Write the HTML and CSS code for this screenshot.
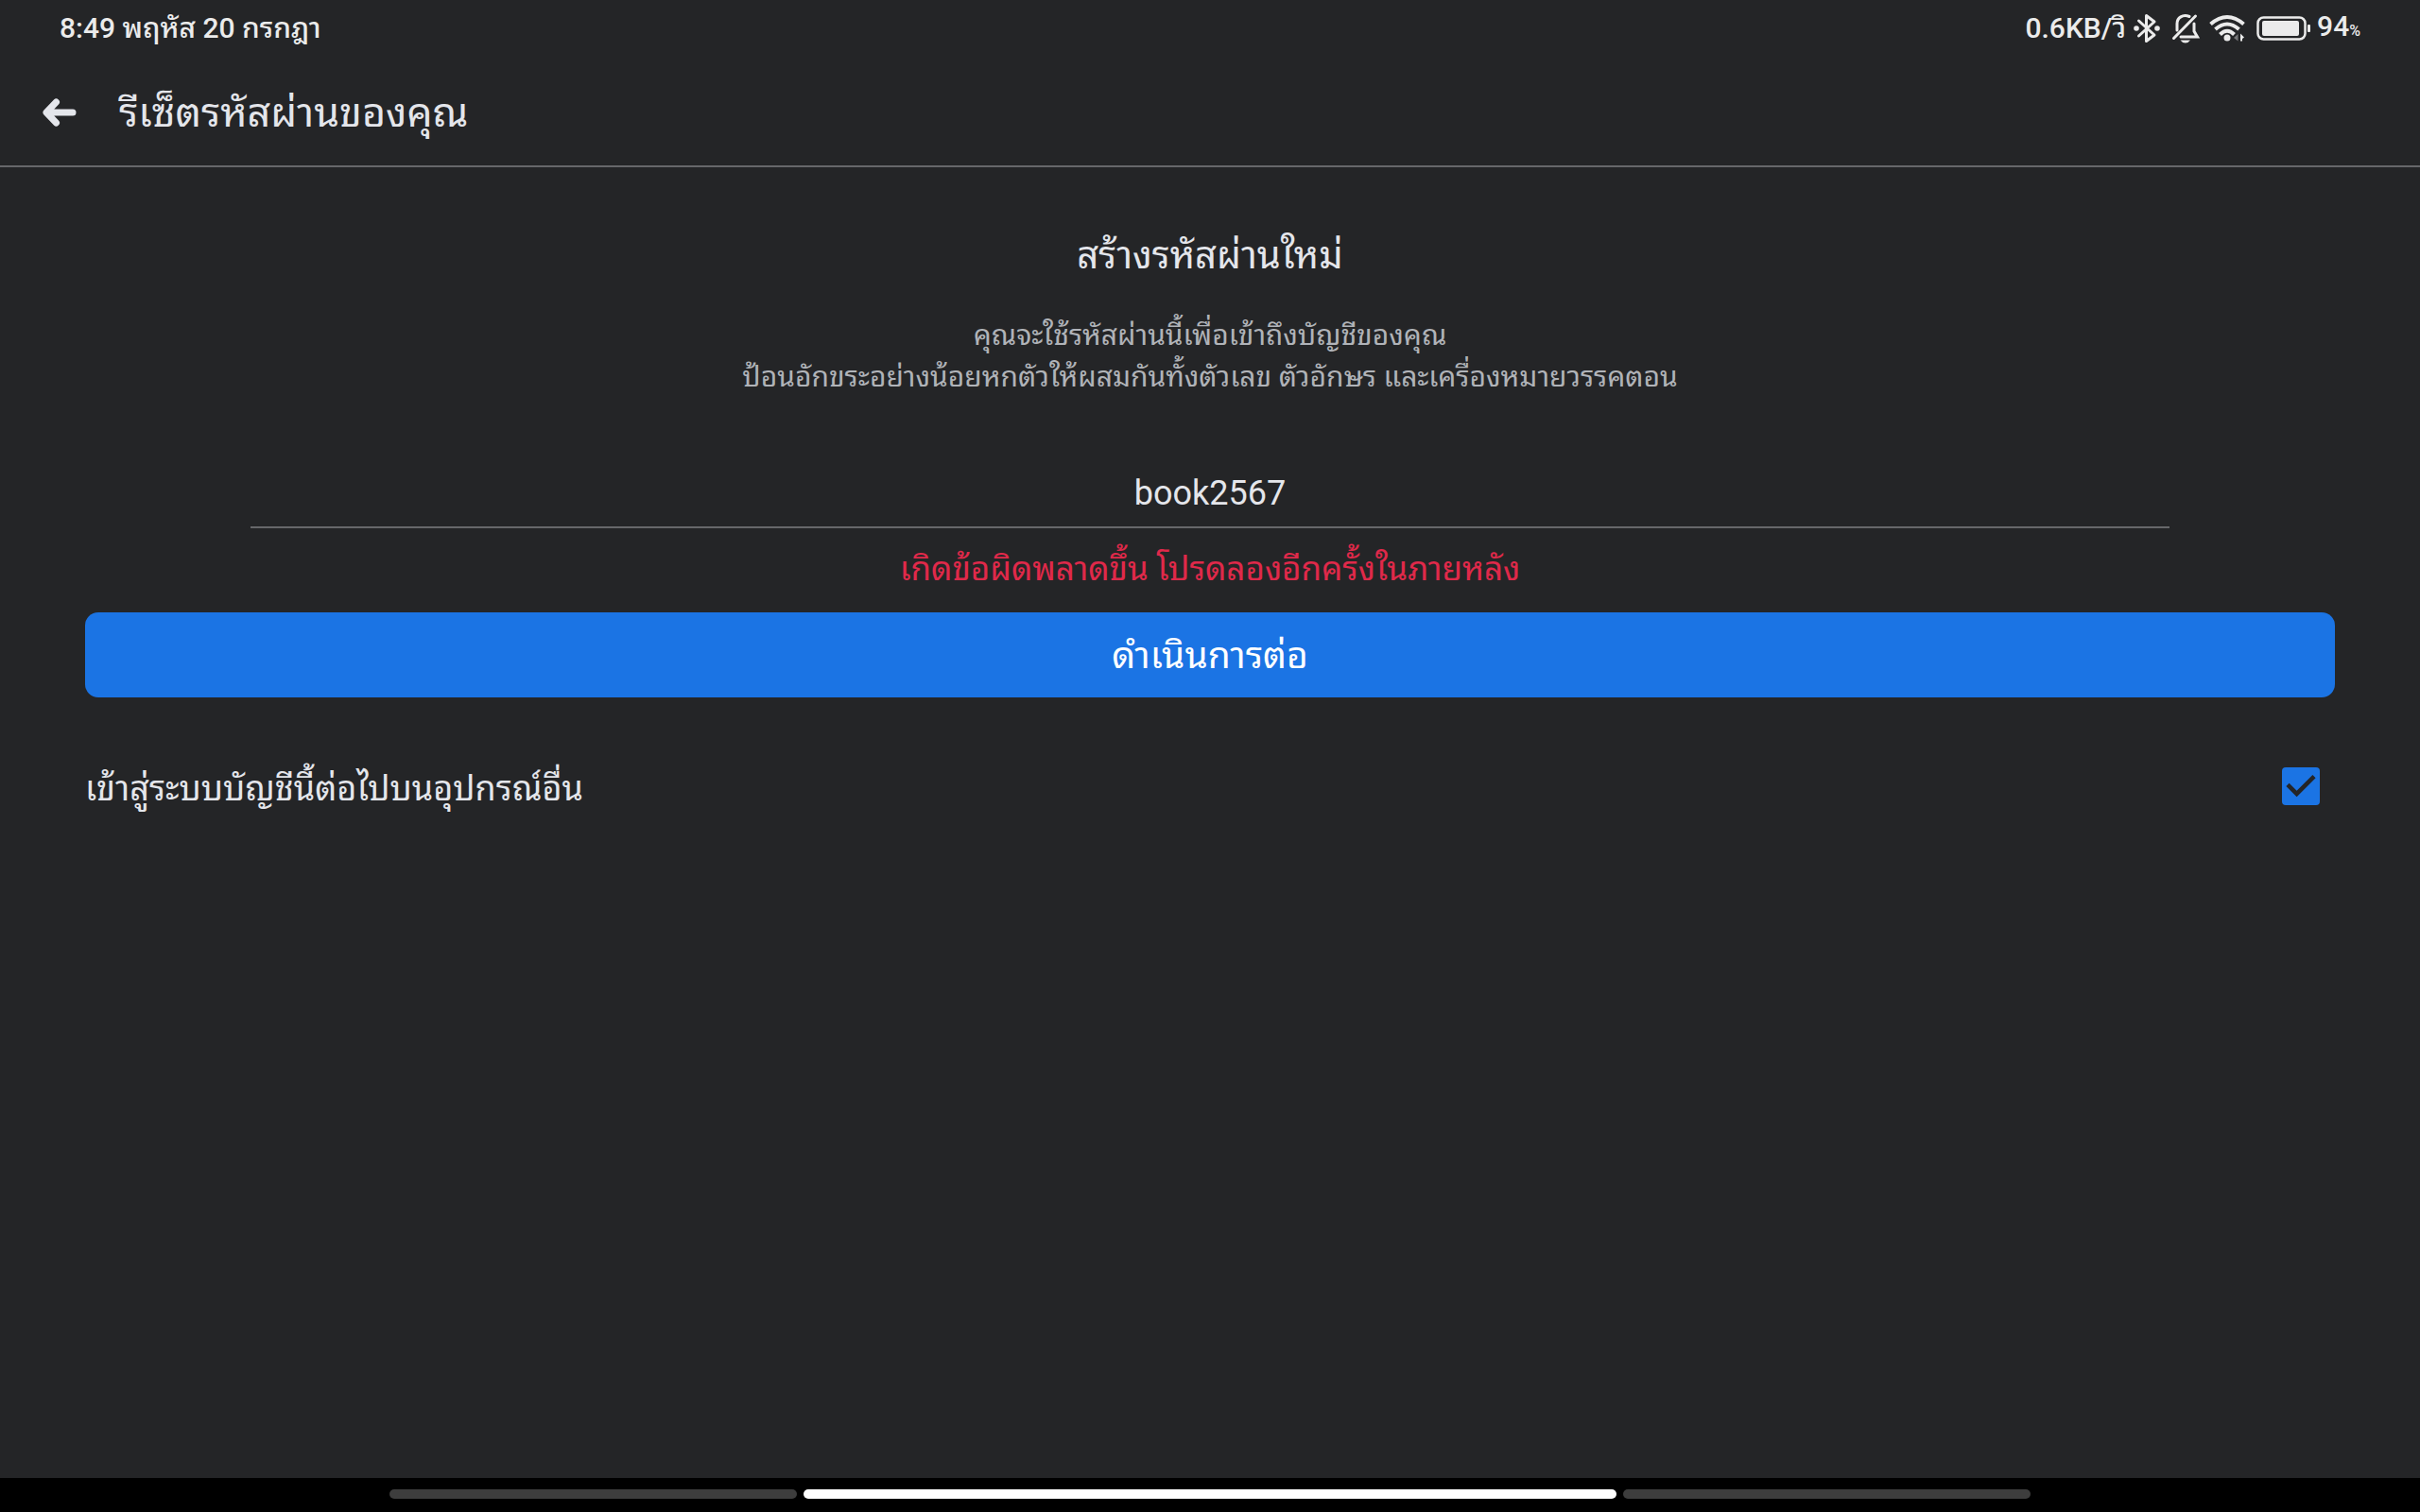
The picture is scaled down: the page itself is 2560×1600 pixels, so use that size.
FILE: index.html
```html
<!DOCTYPE html>
<html lang="th">
<head>
  <meta charset="UTF-8">
  <meta name="viewport" content="width=device-width, initial-scale=1.0">
  <title>รีเซ็ตรหัสผ่านของคุณ</title>
  <link rel="stylesheet" href="styles.css">
</head>
<body>
  <div class="status-bar">
    <span class="clock">8:49 พฤหัส 20 กรกฎา</span>
    <div class="status-icons">
      <span class="speed">0.6KB/วิ</span>
      <!-- bluetooth -->
      <svg class="icon-bluetooth" width="28" height="32" viewBox="0 0 28 32" fill="none" stroke="currentColor" stroke-width="3" stroke-linejoin="round" stroke-linecap="round">
        <path d="M5.500 8 L22 23 L13.500 29.500 V2.500 L22 9 L5.500 24"/>
        <circle cx="3" cy="16" r="2.800" fill="currentColor" stroke="none"/>
        <circle cx="25" cy="16" r="2.800" fill="currentColor" stroke="none"/>
      </svg>
      <!-- muted bell -->
      <svg class="icon-bell" width="30" height="32" viewBox="0 0 30 32" fill="none" stroke="currentColor" stroke-width="3" stroke-linecap="round">
        <path d="M19 3.500 C12 .5 6 5 6 11 V18"/>
        <path d="M24 11 V19 L27.500 25 H10"/>
        <path d="M2.500 26.500 L25.500 3"/>
        <path d="M9.500 28.500 H20 Q18 31.500 14.800 31.500 Q11.500 31.500 9.500 28.500Z" fill="currentColor" stroke="none"/>
      </svg>
      <!-- wifi -->
      <svg class="icon-wifi" width="38" height="30" viewBox="0 0 38 30" fill="none" stroke="currentColor" stroke-width="4">
        <path d="M1.500 10.500 Q19 -4.500 36.500 10.500"/>
        <path d="M6.500 16 Q19 5 31.500 16"/>
        <path d="M11.500 21.500 Q19 14 26.500 21.500"/>
        <circle cx="19" cy="25" r="3.500" fill="currentColor" stroke="none"/>
        <path d="M30.500 21 V28.500 L26 25Z" fill="#77787a" stroke="none"/>
        <path d="M33 28.500 V20.500 L37 24.500 L35 26 V28.500Z" fill="currentColor" stroke="none"/>
      </svg>
      <!-- battery -->
      <svg class="icon-battery" width="58" height="26" viewBox="0 0 58 26" fill="none">
        <rect x="1.500" y="1.500" width="50" height="23" rx="6" stroke="currentColor" stroke-width="2.500"/>
        <rect x="6" y="5" width="39" height="16" rx="2" fill="currentColor"/>
        <rect x="54" y="9" width="3" height="8" rx="1" fill="currentColor"/>
      </svg>
      <span class="level">94<small>%</small></span>
    </div>
  </div>

  <header class="app-bar">
    <button type="button" class="back" aria-label="กลับ">
      <svg width="36" height="30" viewBox="0 0 36 30" fill="none" stroke="currentColor" stroke-width="7" stroke-linecap="round" stroke-linejoin="round">
        <path d="M14.500 4 L4 15 L14.500 26 M5 15 H32"/>
      </svg>
    </button>
    <h1>รีเซ็ตรหัสผ่านของคุณ</h1>
  </header>

  <main>
    <form>
      <h2>สร้างรหัสผ่านใหม่</h2>
      <p class="hint">คุณจะใช้รหัสผ่านนี้เพื่อเข้าถึงบัญชีของคุณ<br>ป้อนอักขระอย่างน้อยหกตัวให้ผสมกันทั้งตัวเลข ตัวอักษร และเครื่องหมายวรรคตอน</p>
      <input type="text" class="password" value="book2567" aria-label="รหัสผ่านใหม่">
      <p class="error">เกิดข้อผิดพลาดขึ้น โปรดลองอีกครั้งในภายหลัง</p>
      <button type="button" class="submit">ดำเนินการต่อ</button>
      <div class="keep">
        <label for="keep">เข้าสู่ระบบบัญชีนี้ต่อไปบนอุปกรณ์อื่น</label>
        <input type="checkbox" id="keep" checked>
      </div>
    </form>
  </main>

  <div class="nav-bar">
    <div class="pills">
      <span></span>
      <span class="active"></span>
      <span></span>
    </div>
  </div>
</body>
</html>
```
FILE: styles.css
```css
* {
  box-sizing: border-box;
}

body {
  display: flex;
  flex-direction: column;
  min-height: 100vh;
  margin: 0;
  background-color: #242527;
  color: #e4e6eb;
  font-family: Roboto, 'Noto Sans Thai Looped', 'Droid Sans Thai', 'Loma', sans-serif;
}

h1, h2, p {
  margin: 0;
  font-weight: 400;
}

button, input {
  font-family: inherit;
  color: inherit;
  border: none;
}

/* Status bar */
.status-bar {
  display: flex;
  justify-content: space-between;
  align-items: center;
  height: 60px;
  padding: 0 63px;
  color: #ebebeb;
  font-size: 30px;
  font-weight: 500;
  line-height: 60px;
}

.status-icons {
  display: flex;
  align-items: center;
}

.icon-bluetooth {
  margin-left: 8px;
}

.icon-bell {
  margin-left: 12px;
}

.icon-wifi {
  margin-left: 10px;
}

.icon-battery {
  margin-left: 12px;
}

.level {
  margin-left: 6px;
}

.level small {
  font-size: 16px;
}

/* Title bar */
.app-bar {
  display: flex;
  align-items: center;
  gap: 45px;
  height: 117px;
  padding: 2px 45px 0;
  border-bottom: 2px solid #66676a;
}

.back {
  display: flex;
  padding: 0;
  background: none;
}

h1 {
  font-size: 43px;
  line-height: 60px;
}

/* Form */
main {
  flex: 1;
  padding: 62px 90px;
}

form {
  display: flex;
  flex-direction: column;
  text-align: center;
}

h2 {
  font-size: 40px;
  line-height: 64px;
}

.hint {
  margin-top: 30px;
  color: #b0b3b8;
  font-size: 30px;
  line-height: 44px;
}

.password {
  height: 78px;
  margin: 60px 175px 0;
  padding: 6px 0 0;
  border-bottom: 2px solid #66676a;
  background: none;
  font-size: 36px;
  text-align: center;
  outline: none;
}

.error {
  margin-top: 16px;
  color: #e0294a;
  font-size: 35px;
  line-height: 56px;
}

.submit {
  height: 90px;
  margin-top: 17px;
  padding: 2px 0 0;
  border-radius: 14px;
  background-color: #1b74e4;
  color: #fff;
  font-size: 39px;
  line-height: 60px;
}

.keep {
  display: flex;
  justify-content: space-between;
  align-items: center;
  margin-top: 64px;
  padding-right: 16px;
}

.keep label {
  padding-top: 6px;
  font-size: 36px;
  line-height: 54px;
}

.keep input {
  appearance: none;
  width: 40px;
  height: 40px;
  margin: 0;
  border-radius: 4px;
  background-color: #1b74e4;
}

.keep input:checked::before {
  content: '';
  display: block;
  height: 100%;
  background-color: #242527;
  clip-path: polygon(39% 78%, 11% 50%, 19% 42%, 39% 62%, 81% 20%, 89% 28%);
}

/* Gesture bar */
.nav-bar {
  display: flex;
  justify-content: center;
  height: 36px;
  padding-top: 12px;
  background-color: #000;
}

.pills {
  display: grid;
  grid-template-columns: 1fr 2fr 1fr;
  gap: 7px;
  width: 67.8%;
  height: 10px;
}

.pills span {
  border-radius: 5px;
  background-color: #3d3d3d;
}

.pills .active {
  background-color: #fff;
}
```
